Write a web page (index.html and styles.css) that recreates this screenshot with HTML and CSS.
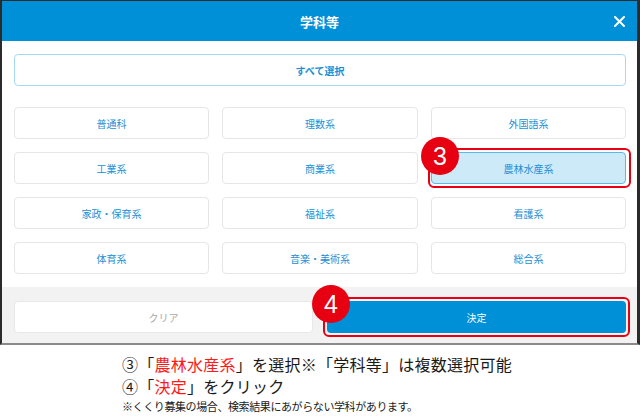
FILE: index.html
```html
<!DOCTYPE html>
<html lang="ja">
<head>
    <meta charset="UTF-8">
    <meta name="viewport" content="width=device-width, initial-scale=1.0">
    <title>学科等</title>
    <link rel="stylesheet" href="styles.css">
</head>
<body>

<div class="frame">
    <div class="modal-header">
        <span class="modal-title">学科等</span>
        <span class="close">
            <svg width="11" height="11" viewBox="0 0 11 11"><path d="M1 1L10 10M10 1L1 10" stroke="#fff" stroke-width="2" stroke-linecap="round"/></svg>
        </span>
    </div>

    <div class="modal-body">
        <button class="select-all">すべて選択</button>
        <div class="options">
            <div class="option">普通科</div>
            <div class="option">理数系</div>
            <div class="option">外国語系</div>
            <div class="option">工業系</div>
            <div class="option">商業系</div>
            <div class="option selected">
                農林水産系
                <span class="mark"></span>
                <span class="badge">3</span>
            </div>
            <div class="option">家政・保育系</div>
            <div class="option">福祉系</div>
            <div class="option">看護系</div>
            <div class="option">体育系</div>
            <div class="option">音楽・美術系</div>
            <div class="option">総合系</div>
        </div>
    </div>

    <div class="modal-footer">
        <button class="btn-clear">クリア</button>
        <button class="btn-ok">
            決定
            <span class="mark"></span>
            <span class="badge">4</span>
        </button>
    </div>
</div>

<div class="notes">
    <p class="step">③「<span class="red">農林水産系</span>」を選択※「学科等」は複数選択可能</p>
    <p class="step">④「<span class="red">決定</span>」をクリック</p>
    <p class="small">※くくり募集の場合、検索結果にあがらない学科があります。</p>
</div>

</body>
</html>
```

FILE: styles.css
```css
body {
    margin: 0;
    background: #fff;
    font-family: "Noto Sans CJK JP", "Noto Sans", sans-serif;
}
.frame {
    width: 640px;
    height: 345px;
    box-sizing: border-box;
    border-left: 2px solid #2b2b2b;
    border-top: 1px solid #2b2b2b;
    border-right: 3px solid #2b2b2b;
    border-bottom: 2px solid #8a8a8a;
    display: flex;
    flex-direction: column;
}
.modal-header {
    height: 40px;
    background: #0090d8;
    display: flex;
    align-items: center;
    justify-content: center;
    position: relative;
}
.modal-title {
    color: #fff;
    font-size: 13px;
    font-weight: bold;
}
.close {
    position: absolute;
    right: 12px;
    top: 15px;
    line-height: 0;
}
.modal-body {
    padding: 13px 11px 13px 12px;
    background: #fff;
}
button {
    font-family: inherit;
    cursor: pointer;
}
.select-all {
    display: block;
    width: 100%;
    height: 32px;
    background: #fff;
    border: 1px solid #a6d9f4;
    border-radius: 4px;
    color: #1a8fd5;
    font-size: 10px;
    font-weight: bold;
    margin-bottom: 21px;
}
.options {
    display: grid;
    grid-template-columns: 195px 196px 195px;
    column-gap: 13px;
    row-gap: 13px;
}
.option {
    height: 32px;
    box-sizing: border-box;
    border: 1px solid #e6e6e6;
    border-radius: 4px;
    display: flex;
    align-items: center;
    justify-content: center;
    color: #1a8fd5;
    font-size: 10px;
    position: relative;
}
.option.selected {
    background: #cdeaf9;
    border-color: #5db8e8;
}
.mark {
    position: absolute;
    top: -5px;
    left: -4px;
    right: -6px;
    bottom: -5px;
    border: 2px solid #e60012;
    border-radius: 6px;
}
.badge {
    position: absolute;
    left: -11px;
    top: -16px;
    width: 38px;
    height: 38px;
    border-radius: 50%;
    background: #e60012;
    color: #fff;
    font-family: "Liberation Sans", Arial, sans-serif;
    font-size: 25px;
    line-height: 38px;
    text-align: center;
}
.modal-footer {
    flex: 1;
    background: #f2f2f2;
    padding: 14px 11px 0 12px;
    display: flex;
    gap: 14px;
}
.modal-footer button {
    width: 299px;
    height: 32px;
    border-radius: 4px;
    font-size: 10px;
    position: relative;
}
.btn-clear {
    background: #fff;
    border: 1px solid #e8e8e8;
    color: #a8a8a8;
}
.btn-ok {
    background: #0090d8;
    border: none;
    color: #fff;
}
.btn-ok .mark {
    top: -4px;
    left: -4px;
    right: -4px;
    bottom: -4px;
}
.btn-ok .badge {
    left: -15px;
    top: -16px;
}
.notes {
    padding-left: 122px;
    padding-top: 8px;
    color: #1a1a1a;
}
.notes p {
    margin: 0;
}
.step {
    font-size: 16px;
    letter-spacing: 0.25px;
    line-height: 22px;
}
.small {
    font-size: 11px;
    letter-spacing: -0.4px;
    line-height: 18px;
}
.red {
    color: #ff1a1a;
}
```
